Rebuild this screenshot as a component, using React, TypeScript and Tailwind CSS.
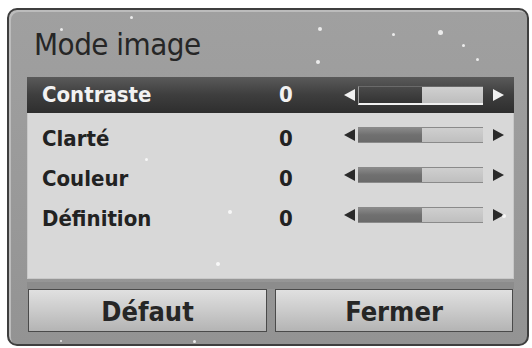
import React from "react";

function Arrow({ dir, color }: { dir: "l" | "r"; color: string }) {
  return (
    <svg width="13" height="14" viewBox="0 0 13 14" className="shrink-0">
      {dir === "l" ? (
        <polygon points="1,7 12,1 12,13" fill={color} />
      ) : (
        <polygon points="12,7 1,1 1,13" fill={color} />
      )}
    </svg>
  );
}

function Slider({ active }: { active?: boolean }) {
  const arrow = active ? "#f2f2f2" : "#2a2a2a";
  return (
    <div className="flex items-center">
      <Arrow dir="l" color={arrow} />
      <div
        className={
          active
            ? "ml-[2px] flex h-[19px] w-[125px] border-l border-t border-b-2 border-l-[#9a9a9a] border-t-[#6a6a6a] border-b-[#f0f0f0] bg-[#c4c4c4]"
            : "ml-[2px] flex h-[16px] w-[125px] border-y border-[#8a8a8a] bg-[#c6c6c6]"
        }
      >
        <div
          className={
            active
              ? "h-full w-[63px] bg-gradient-to-b from-[#4a4a4a] to-[#333333]"
              : "h-full w-[64px] bg-gradient-to-b from-[#8a8a8a] via-[#707070] to-[#6a6a6a]"
          }
        />
        <div
          className={
            active
              ? "h-full flex-1 bg-gradient-to-b from-[#d0d0d0] to-[#bdbdbd]"
              : "h-full flex-1 bg-gradient-to-b from-[#cfcfcf] to-[#bfbfbf]"
          }
        />
      </div>
      <div className="ml-[9px]">
        <Arrow dir="r" color={arrow} />
      </div>
    </div>
  );
}

function Row({ label, active }: { label: string; active?: boolean }) {
  return (
    <div
      className={
        active
          ? "flex h-[36px] items-center bg-gradient-to-b from-[#5a5a5a] via-[#3e3e3e] to-[#2e2e2e] pl-[15px] text-[#f2f2f2]"
          : "flex h-[40px] items-center pl-[15px] text-[#222222]"
      }
    >
      <div className="w-[237px] text-[22px] font-bold leading-none">{label}</div>
      <div className="w-[64px] text-[22px] font-bold leading-none">0</div>
      <div className={active ? "" : "-mt-[8px]"}>
        <Slider active={active} />
      </div>
    </div>
  );
}

const dots = [
  { x: 60, y: 28, s: 3 },
  { x: 130, y: 16, s: 3 },
  { x: 318, y: 27, s: 4 },
  { x: 316, y: 60, s: 4 },
  { x: 392, y: 33, s: 3 },
  { x: 438, y: 30, s: 5 },
  { x: 462, y: 44, s: 3 },
  { x: 476, y: 58, s: 3 },
  { x: 228, y: 210, s: 4 },
  { x: 216, y: 262, s: 4 },
  { x: 145, y: 158, s: 3 },
  { x: 193, y: 340, s: 3 },
  { x: 60, y: 340, s: 2 },
  { x: 502, y: 214, s: 4 },
];

export default function App() {
  return (
    <div
      className="relative h-[348px] w-[532px] overflow-hidden bg-white pb-[2px] pl-[7px] pr-[3px] pt-[8px]"
      style={{ fontFamily: '"DejaVu Sans Condensed", "Liberation Sans", Arial, sans-serif' }}
    >
      <div className="flex h-full flex-col rounded-[10px] border-2 border-[#3f3f3f] bg-gradient-to-b from-[#a0a0a0] via-[#9a9a9a] to-[#939393] pl-[18px] pr-[13px] shadow-[inset_2px_2px_0_#bcbcbc]">
        <div className="flex h-[67px] items-center pl-[7px] pt-[2px] text-[31px] leading-none tracking-[-0.5px] text-[#262626]">
          Mode image
        </div>
        <div className="flex h-[202px] flex-col bg-[#d8d8d8] shadow-[inset_0_0_0_1px_#c8c8c8]">
          <Row label="Contraste" active />
          <div className="h-[6px]" />
          <Row label="Clarté" />
          <Row label="Couleur" />
          <Row label="Définition" />
        </div>
        <div className="mt-[3px] h-[7px] bg-[#8c8c8c]" />
        <div className="flex gap-[8px] pl-[1px] pr-[1px]">
          <div className="flex h-[43px] w-[239px] items-center justify-center border border-[#4a4a4a] bg-gradient-to-b from-[#e0e0e0] via-[#cbcbcb] to-[#b4b4b4] pt-[1px] text-[27px] font-bold leading-none text-[#262626]">
            Défaut
          </div>
          <div className="flex h-[43px] flex-1 items-center justify-center border border-[#4a4a4a] bg-gradient-to-b from-[#e0e0e0] via-[#cbcbcb] to-[#b4b4b4] pt-[1px] text-[27px] font-bold leading-none text-[#262626]">
            Fermer
          </div>
        </div>
      </div>
      {dots.map((d, i) => (
        <div
          key={i}
          className="absolute rounded-full bg-white opacity-80 blur-[0.5px]"
          style={{ left: d.x, top: d.y, width: d.s, height: d.s }}
        />
      ))}
    </div>
  );
}
